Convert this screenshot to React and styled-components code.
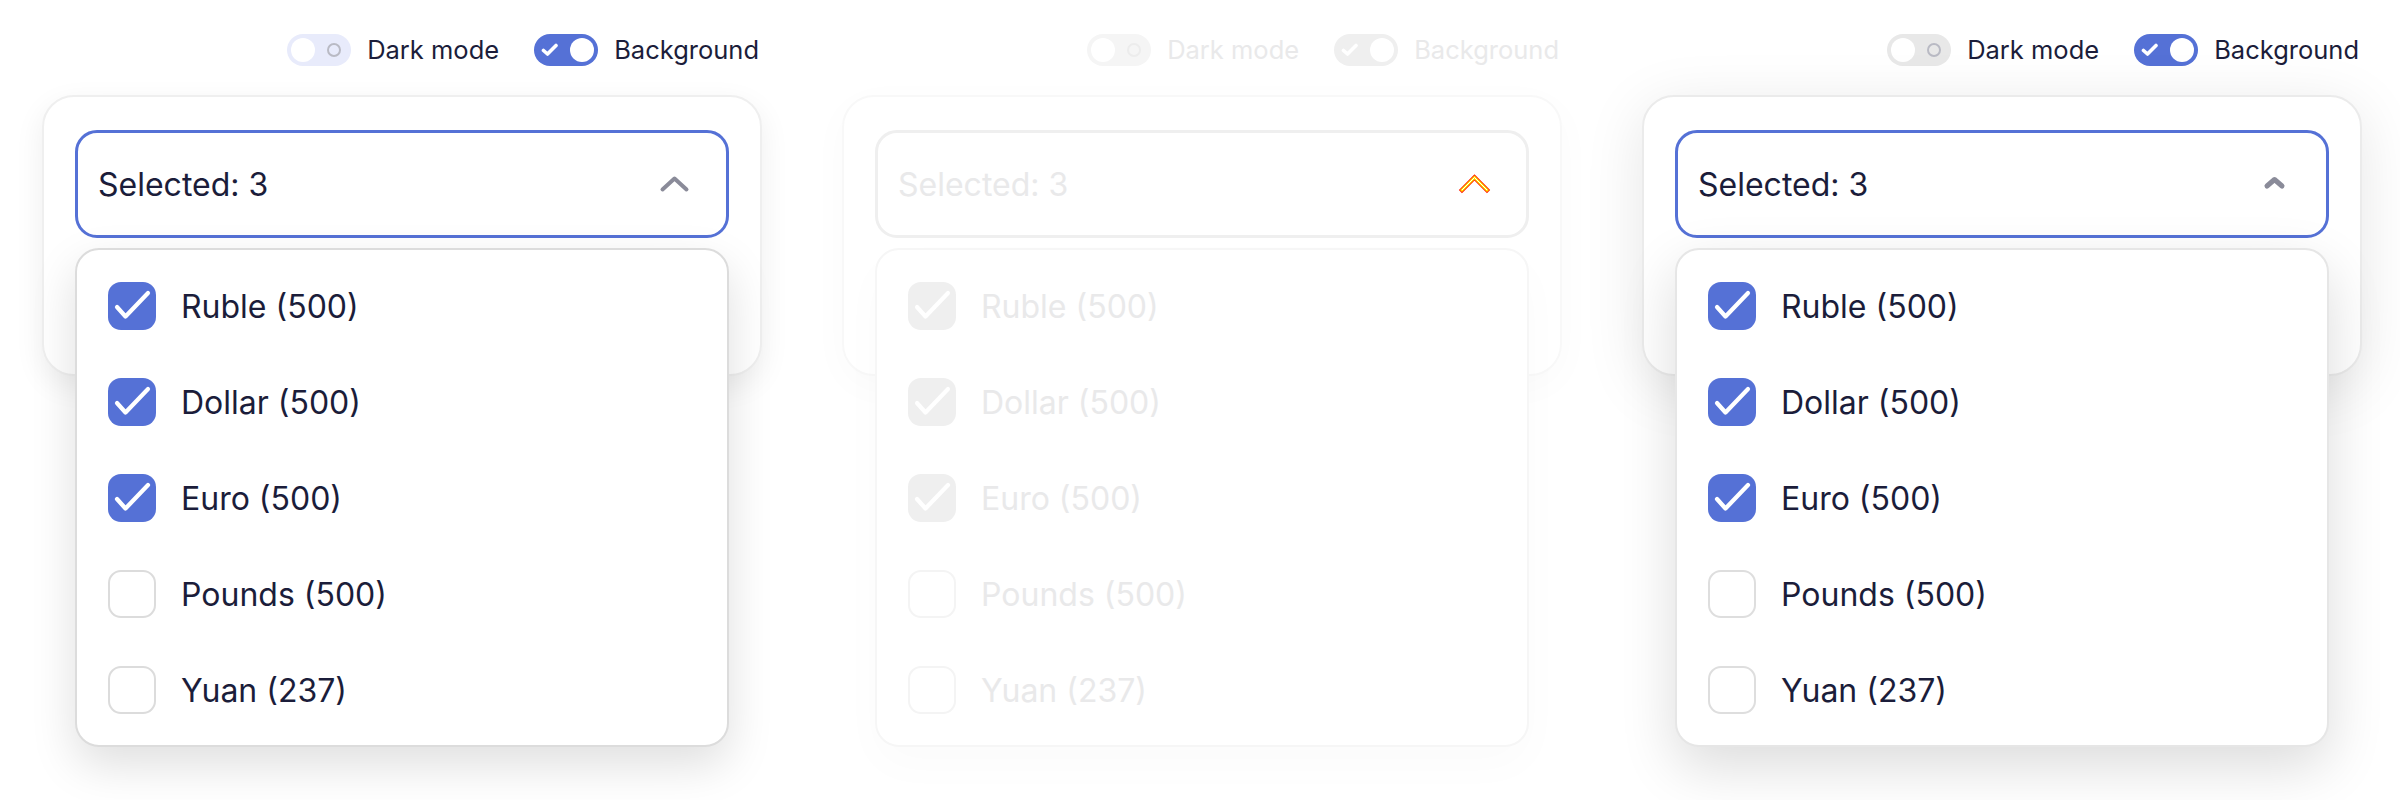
import React from "react";
import styled, { createGlobalStyle, ThemeProvider } from "styled-components";

const GlobalStyle = createGlobalStyle`
  html, body { margin: 0; padding: 0; background: #ffffff; }
  body { font-family: Inter, "Noto Sans", sans-serif; -webkit-font-smoothing: antialiased; }
  * { box-sizing: border-box; }
`;

const themes = {
  light: {
    text: "#1b1d3a",
    accent: "#5571d6",
    offTrack: "#e8ebfb",
    ring: "#b9bac4",
    cardBorder: "#efefef",
    listBorder: "#dcdcdc",
    boxBorder: "#dcdcdc",
    chevron: "#8a8b99",
    cardShadow: "0 10px 30px rgba(0,0,0,0.07)",
    listShadow: "0 18px 46px rgba(0,0,0,0.13)",
    chev: "wide",
  },
  ghost: {
    text: "#e9e9ea",
    accent: "#efefef",
    offTrack: "#f5f5f5",
    ring: "#ececec",
    cardBorder: "#f8f8f8",
    listBorder: "#f6f6f6",
    boxBorder: "#f4f4f4",
    selectBorder: "#efefef",
    chevron: "#ffcc00",
    cardShadow: "0 10px 40px rgba(0,0,0,0.025)",
    listShadow: "0 18px 46px rgba(0,0,0,0.02)",
    chev: "debug",
  },
  gray: {
    text: "#1b1d3a",
    accent: "#5571d6",
    offTrack: "#e8e8e8",
    ring: "#b9bac4",
    cardBorder: "#ebebeb",
    listBorder: "#e6e6e6",
    boxBorder: "#dedede",
    chevron: "#8a8b99",
    cardShadow: "0 12px 60px rgba(0,0,0,0.10)",
    listShadow: "0 20px 56px rgba(0,0,0,0.14)",
    chev: "small",
  },
};

const Page = styled.div`
  display: grid;
  grid-template-columns: repeat(3, 800px);
  width: 2400px;
  min-height: 800px;
`;

const Panel = styled.section`
  display: flex;
  flex-direction: column;
  gap: 29px;
  padding: 34px 38px 0 42px;
`;

const ToggleBar = styled.div`
  display: flex;
  justify-content: flex-end;
  align-items: center;
  gap: 35px;
  padding-right: 3px;
`;

const ToggleItem = styled.label`
  display: flex;
  align-items: center;
  gap: 16px;
  font-size: 25.5px;
  line-height: 32px;
  color: ${(p) => p.theme.text};
`;

const Track = styled.span`
  position: relative;
  display: flex;
  align-items: center;
  justify-content: space-between;
  width: 64px;
  height: 32px;
  border-radius: 16px;
  padding: 0 4px;
  background: ${(p) => (p.$on ? p.theme.accent : p.theme.offTrack)};
`;

const Knob = styled.span`
  width: 24px;
  height: 24px;
  border-radius: 50%;
  background: #ffffff;
`;

const Ring = styled.span`
  width: 14px;
  height: 14px;
  margin-right: 6px;
  border-radius: 50%;
  border: 2.5px solid ${(p) => p.theme.ring};
`;

const SmallCheck = styled.svg`
  width: 18px;
  height: 14px;
  margin-left: 3px;
`;

const Card = styled.div`
  position: relative;
  width: 720px;
  border: 2px solid ${(p) => p.theme.cardBorder};
  border-radius: 32px;
  background: #ffffff;
  padding: 33px 31px 136px;
  box-shadow: ${(p) => p.theme.cardShadow};
`;

const SelectBox = styled.div`
  display: flex;
  align-items: center;
  justify-content: space-between;
  height: 108px;
  border: 3.5px solid ${(p) => p.theme.selectBorder || p.theme.accent};
  border-radius: 22px;
  padding: 0 37px 0 20px;
  font-size: 32px;
  color: ${(p) => p.theme.text};
`;

const ChevronSlot = styled.svg`
  width: 29px;
  height: 16px;
  overflow: visible;
`;

const Dropdown = styled.ul`
  position: absolute;
  top: 151px;
  left: 31px;
  width: 654px;
  margin: 0;
  padding: 8px 0 7px;
  list-style: none;
  background: #ffffff;
  border: 2px solid ${(p) => p.theme.listBorder};
  border-radius: 24px;
  box-shadow: ${(p) => p.theme.listShadow};
  z-index: 2;
`;

const OptionRow = styled.li`
  display: flex;
  align-items: center;
  gap: 25px;
  height: 96px;
  padding-left: 31px;
  font-size: 32px;
  color: ${(p) => p.theme.text};
`;

const Box = styled.span`
  display: flex;
  align-items: center;
  justify-content: center;
  width: 48px;
  height: 48px;
  border-radius: 13px;
  background: ${(p) => (p.$checked ? p.theme.accent : "#ffffff")};
  border: ${(p) => (p.$checked ? "none" : `2px solid ${p.theme.boxBorder}`)};
`;

function Chevron({ kind, color }) {
  if (kind === "small") {
    return (
      <ChevronSlot viewBox="0 0 29 16">
        <polyline points="7,10 14.5,3.5 22,10" fill="none" stroke={color} strokeWidth="5" strokeLinecap="round" strokeLinejoin="round" />
      </ChevronSlot>
    );
  }
  if (kind === "debug") {
    return (
      <ChevronSlot viewBox="0 0 29 16">
        <polyline points="2,14 14.5,1.5 27,14" fill="none" stroke="#ff1a00" strokeWidth="4.5" strokeLinecap="square" strokeLinejoin="miter" />
        <polyline points="2,14 14.5,1.5 27,14" fill="none" stroke="#ffe100" strokeWidth="2.8" strokeLinecap="square" />
        <polyline points="2,14 14.5,1.5 27,14" fill="none" stroke="#ffffff" strokeWidth="1" />
      </ChevronSlot>
    );
  }
  return (
    <ChevronSlot viewBox="0 0 29 16">
      <polyline points="2.5,13.5 14.5,2.5 26.5,13.5" fill="none" stroke={color} strokeWidth="4" strokeLinecap="round" strokeLinejoin="round" />
    </ChevronSlot>
  );
}

const options = [
  { label: "Ruble (500)", checked: true },
  { label: "Dollar (500)", checked: true },
  { label: "Euro (500)", checked: true },
  { label: "Pounds (500)", checked: false },
  { label: "Yuan (237)", checked: false },
];

function Demo({ theme }) {
  return (
    <ThemeProvider theme={theme}>
      <Panel>
        <ToggleBar>
          <ToggleItem>
            <Track>
              <Knob />
              <Ring />
            </Track>
            Dark mode
          </ToggleItem>
          <ToggleItem>
            <Track $on>
              <SmallCheck viewBox="0 0 18 14">
                <polyline points="2.5,7.5 6.5,11 15,2.5" fill="none" stroke="#ffffff" strokeWidth="3.6" strokeLinecap="round" strokeLinejoin="round" />
              </SmallCheck>
              <Knob />
            </Track>
            Background
          </ToggleItem>
        </ToggleBar>
        <Card>
          <SelectBox>
            <span>Selected: 3</span>
            <Chevron kind={theme.chev} color={theme.chevron} />
          </SelectBox>
          <Dropdown>
            {options.map((o) => (
              <OptionRow key={o.label}>
                <Box $checked={o.checked}>
                  {o.checked && (
                    <svg width="48" height="48" viewBox="0 0 48 48">
                      <polyline points="9,25 17.5,34.5 40,11" fill="none" stroke="#ffffff" strokeWidth="4.2" strokeLinecap="round" strokeLinejoin="round" />
                    </svg>
                  )}
                </Box>
                {o.label}
              </OptionRow>
            ))}
          </Dropdown>
        </Card>
      </Panel>
    </ThemeProvider>
  );
}

export default function App() {
  return (
    <>
      <GlobalStyle />
      <Page>
        <Demo theme={themes.light} />
        <Demo theme={themes.ghost} />
        <Demo theme={themes.gray} />
      </Page>
    </>
  );
}
